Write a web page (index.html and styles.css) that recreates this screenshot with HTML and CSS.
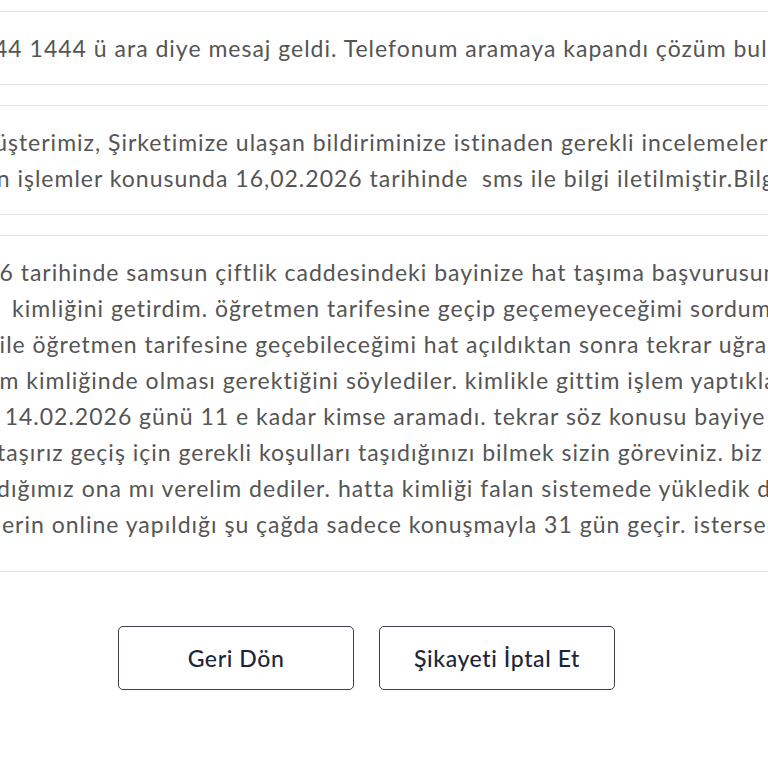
FILE: index.html
```html
<!DOCTYPE html>
<html lang="tr">
<head>
  <meta charset="UTF-8">
  <meta name="viewport" content="width=device-width, initial-scale=1.0">
  <title>Şikayet Detayı</title>
  <link rel="stylesheet" href="styles.css">
</head>
<body>
  <div class="page">
    <div class="field">
      <div class="ln">ı 0 444 1444 ü ara diye mesaj geldi. Telefonum aramaya kapandı çözüm bulunamadı.</div>
    </div>

    <div class="field">
      <div class="ln">rli müşterimiz, Şirketimize ulaşan bildiriminize istinaden gerekli incelemeler yapılmıştır.</div>
      <div class="ln">apılan işlemler konusunda 16,02.2026 tarihinde &nbsp;sms ile bilgi iletilmiştir.Bilgilerinize sunarız.</div>
    </div>

    <div class="field">
      <div class="scroll">
        <div class="ln">/202<span>6 tarihinde samsun çiftlik caddesindeki bayinize hat taşıma başvurusunda bulundum.</span></div>
        <div class="ln">men.&nbsp; kimliğini getirdim. öğretmen tarifesine geçip geçemeyeceğimi sordum. olur dediler.</div>
        <div class="ln">ğları ile öğretmen tarifesine geçebileceğimi hat açıldıktan sonra tekrar uğramanızı</div>
        <div class="ln">duğum kimliğinde olması gerektiğini söylediler. kimlikle gittim işlem yaptıklarını söylediler.</div>
        <div class="ln">adım 14.02.2026 günü 11 e kadar kimse aramadı. tekrar söz konusu bayiye gittim.</div>
        <div class="ln">i biz taşırız geçiş için gerekli koşulları taşıdığınızı bilmek sizin göreviniz. biz aracıyız</div>
        <div class="ln">an aldığımız ona mı verelim dediler. hatta kimliği falan sistemede yükledik dediler.</div>
        <div class="ln">şlemlerin online yapıldığı şu çağda sadece konuşmayla 31 gün geçir. isterseniz</div>
        <div class="ln">ile üstünde durmadan geçiştirdiler, bu konuda bir çözüm bekliyorum, mağdur edildim.</div>
      </div>
    </div>

    <div class="actions">
      <button type="button" class="btn">Geri Dön</button>
      <button type="button" class="btn">Şikayeti İptal Et</button>
    </div>
  </div>
</body>
</html>
```

FILE: styles.css
```css
/* Şikayet detay sayfası */
html, body {
  margin: 0;
  background: #fff;
  overflow: hidden;
}
body {
  font-family: Lato, "Open Sans", sans-serif;
  color: #555;
}
.page {
  margin: 0 -25px 0 -60px;
  padding-top: 11px;
}
.field {
  border: 1px solid #e6e6e6;
  padding: 18px 20px 18px 4px;
  margin-bottom: 20px;
  overflow: hidden;
  background: #fff;
}
.ln {
  font-size: 23px;
  letter-spacing: 1px;
  line-height: 36px;
  white-space: nowrap;
}
.scroll {
  height: 297px;
  margin-bottom: 2px;
  overflow: hidden;
}
.actions {
  display: flex;
  justify-content: center;
  gap: 25px;
  padding-top: 34px;
}
.btn {
  width: 236px;
  height: 64px;
  background: #fff;
  border: 1px solid #3b404a;
  border-radius: 5px;
  font-family: Lato, "Open Sans", sans-serif;
  font-size: 23px;
  font-weight: 500;
  letter-spacing: 0.6px;
  color: #1d2639;
  cursor: pointer;
}
```
